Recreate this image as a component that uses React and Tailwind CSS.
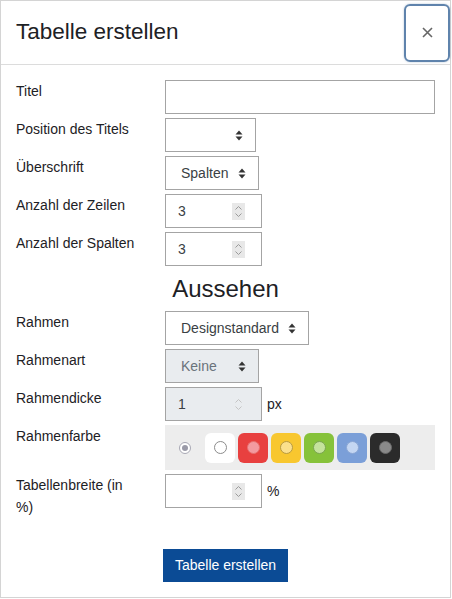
import React from 'react';

const SelectArrows = () => (
  <svg width="8" height="11" viewBox="0 0 8 11" className="shrink-0">
    <path d="M4 0.5 L7.5 4.5 L0.5 4.5 Z" fill="#333" />
    <path d="M4 10.5 L7.5 6.5 L0.5 6.5 Z" fill="#333" />
  </svg>
);

const Spinner = ({ faded }) => (
  <div className={`w-[13px] h-[17px] flex items-center justify-center ${faded ? 'bg-transparent' : 'bg-[#e8e8e8]'}`}>
    <svg width="9" height="13" viewBox="0 0 9 13">
      <path d="M1.5 4.5 L4.5 1.5 L7.5 4.5" fill="none" stroke={faded ? '#c4c4c4' : '#9a9a9a'} strokeWidth="1" />
      <path d="M1.5 8.5 L4.5 11.5 L7.5 8.5" fill="none" stroke={faded ? '#c4c4c4' : '#9a9a9a'} strokeWidth="1" />
    </svg>
  </div>
);

const Row = ({ label, children, narrow }) => (
  <div className="flex">
    <div className={`w-[149px] shrink-0 text-[14px] leading-[22px] ${narrow ? 'pr-[30px]' : 'pr-[15px]'}`}>{label}</div>
    <div className="flex items-start gap-[5px]">{children}</div>
  </div>
);

const Select = ({ width, value, disabled }) => (
  <div
    className={`h-[34px] border border-[#a4a4a4] flex items-center justify-between pl-[15px] pr-[12px] text-[14px] ${
      disabled ? 'bg-[#e9ecef] text-[#6a737b]' : 'bg-white text-[#3a3f44]'
    }`}
    style={{ width }}
  >
    <span>{value}</span>
    <SelectArrows />
  </div>
);

const NumberInput = ({ value, disabled }) => (
  <div
    className={`w-[97px] h-[34px] border border-[#a4a4a4] flex items-center justify-between pl-[12px] pr-[16px] text-[14px] text-[#3a3f44] ${
      disabled ? 'bg-[#e9ecef]' : 'bg-white'
    }`}
  >
    <span>{value}</span>
    <Spinner faded={disabled} />
  </div>
);

const Unit = ({ children }) => <span className="text-[14px] leading-[34px]">{children}</span>;

const swatches = [
  { bg: 'bg-white', dot: 'bg-white border-[#8c8c8c]' },
  { bg: 'bg-[#e8403f]', dot: 'bg-[#f39aa0] border-[#e8706f]' },
  { bg: 'bg-[#f8c72f]', dot: 'bg-[#fbe08c] border-[#b89a40]' },
  { bg: 'bg-[#86c23a]', dot: 'bg-[#c5e39c] border-[#7aa550]' },
  { bg: 'bg-[#7b9fd8]', dot: 'bg-[#c4d6f2] border-[#8aa6d4]' },
  { bg: 'bg-[#2b2b2b]', dot: 'bg-[#8a8a8a] border-[#6a6a6a]' },
];

export default function App() {
  return (
    <div className="w-[452px] h-[599px] bg-white font-['Liberation_Sans',Arial,sans-serif] text-[#1d2125]">
      <div className="w-[451px] h-[598px] border border-[#d4d4d4] flex flex-col">
        {/* Header */}
        <div className="h-[64px] shrink-0 border-b border-[#dcdcdc] flex items-center justify-between pl-[15px]">
          <h2 className="text-[22.5px] leading-none">Tabelle erstellen</h2>
          <button className="w-[46px] h-[58px] border-2 border-[#5f83ac] rounded-[6px] flex items-center justify-center shadow-[0_0_2px_rgba(95,131,172,0.5)]">
            <svg width="11" height="11" viewBox="0 0 11 11">
              <path d="M1 1 L10 10 M10 1 L1 10" stroke="#666" strokeWidth="1.6" />
            </svg>
          </button>
        </div>

        {/* Body */}
        <div className="flex-1 pt-[15px] pl-[15px] flex flex-col gap-[4px]">
          <Row label="Titel">
            <div className="w-[270px] h-[34px] border border-[#a4a4a4] bg-white" />
          </Row>
          <Row label="Position des Titels">
            <Select width="91px" value="" />
          </Row>
          <Row label="Überschrift">
            <Select width="94px" value="Spalten" />
          </Row>
          <Row label="Anzahl der Zeilen">
            <NumberInput value="3" />
          </Row>
          <Row label="Anzahl der Spalten">
            <NumberInput value="3" />
          </Row>

          <div className="h-[37px] flex items-center justify-center pr-[15px]">
            <h3 className="text-[24px] leading-none">Aussehen</h3>
          </div>

          <Row label="Rahmen">
            <Select width="144px" value="Designstandard" />
          </Row>
          <Row label="Rahmenart">
            <Select width="94px" value="Keine" disabled />
          </Row>
          <Row label="Rahmendicke">
            <NumberInput value="1" disabled />
            <Unit>px</Unit>
          </Row>
          <Row label="Rahmenfarbe">
            <div className="w-[270px] h-[45px] bg-[#ededed] flex items-center pl-[14px] gap-[3px]">
              <div className="w-[12px] h-[12px] rounded-full border border-[#a8a8b4] bg-white flex items-center justify-center mr-[11px]">
                <div className="w-[6px] h-[6px] rounded-full bg-[#9a9aa8]" />
              </div>
              {swatches.map((s, i) => (
                <div key={i} className={`w-[30px] h-[30px] rounded-[6px] flex items-center justify-center ${s.bg}`}>
                  <div className={`w-[13px] h-[13px] rounded-full border ${s.dot}`} />
                </div>
              ))}
            </div>
          </Row>
          <Row label="Tabellenbreite (in %)" narrow>
            <NumberInput value="" />
            <Unit>%</Unit>
          </Row>

          <div className="flex justify-center mt-[27px] pr-[15px]">
            <button className="w-[125px] h-[33px] bg-[#0b4b95] text-white text-[14px]">Tabelle erstellen</button>
          </div>
        </div>
      </div>
    </div>
  );
}
